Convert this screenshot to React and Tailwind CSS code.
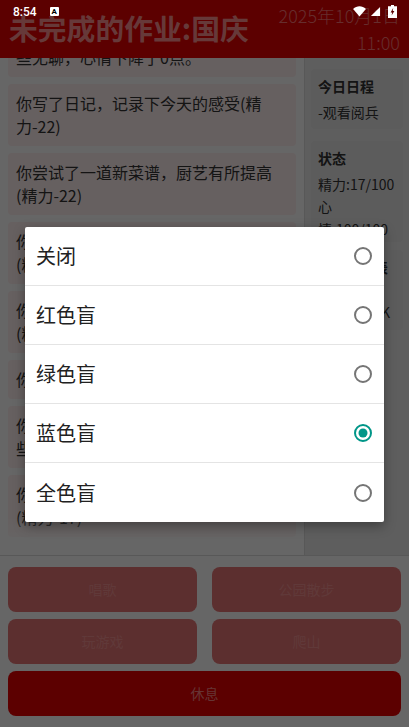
const logs = [
  { id: 1, text: "你今天过得不太开心，整个人都感到有些无聊，心情下降了0点。" },
  { id: 2, text: "你写了日记，记录下今天的感受(精力-22)" },
  { id: 3, text: "你尝试了一道新菜谱，厨艺有所提高(精力-22)" },
  { id: 4, text: "你看了一部老电影，感觉非常有意思(精力-22)" },
  { id: 5, text: "你整理了房间，把东西摆放得很整齐(精力-22)" },
  { id: 6, text: "你睡了一个午觉" },
  { id: 7, text: "你去图书馆看了一会儿书，觉得学到了些新的知识(精力-22)" },
  { id: 8, text: "你出门跑了一会儿步，感觉身体不错(精力-17)" },
];

const options = [
  { id: "off", label: "关闭" },
  { id: "red", label: "红色盲" },
  { id: "green", label: "绿色盲" },
  { id: "blue", label: "蓝色盲", checked: true },
  { id: "all", label: "全色盲" },
];

function Radio({ checked }) {
  return (
    <svg width="20" height="20" viewBox="0 0 20 20">
      <circle cx="10" cy="10" r="8" fill="none" strokeWidth="2" stroke={checked ? "#009688" : "#757575"} />
      {checked && <circle cx="10" cy="10" r="4.5" fill="#009688" />}
    </svg>
  );
}

function StatusBar() {
  return (
    <div className="absolute inset-x-0 top-0 flex h-[23px] items-center text-white">
      <span className="ml-[13px] font-['Roboto',sans-serif] text-[12px] font-medium">8:54</span>
      <span className="ml-[13px] flex h-[9px] w-[9px] items-center justify-center rounded-[1px] bg-white font-['Roboto',sans-serif] text-[8px] leading-none font-bold text-black">
        A
      </span>
      <div className="mr-[12px] ml-auto flex items-center gap-[4px]">
        <svg width="13" height="11" viewBox="0 0 14 12">
          <path d="M0 3.2 C4 -0.6 10 -0.6 14 3.2 L7 11.5 Z" fill="#fff" />
        </svg>
        <svg width="11" height="11" viewBox="0 0 12 12">
          <path d="M11 1 V11 H1 Z" fill="#fff" />
        </svg>
        <svg className="ml-[3px]" width="9" height="13" viewBox="0 0 9 13">
          <path d="M3 0 H6 V1.2 H9 V13 H0 V1.2 H3 Z" fill="#fff" />
          <path d="M5.2 3 L2.6 7.4 H4.2 L3.6 10.6 L6.4 6 H4.7 Z" fill="#5c0000" />
        </svg>
      </div>
    </div>
  );
}

export default function App() {
  return (
    <div className="relative flex h-[727px] w-[409px] flex-col overflow-hidden bg-white font-['Noto_Sans_CJK_SC','Noto_Sans',sans-serif]">
      <header className="z-10 flex h-[58px] shrink-0 justify-between bg-[#e60000] px-[9px]">
        <h1 className="mt-[8px] text-[28.8px] leading-[40px] font-bold text-[#ff8f8f]">未完成的作业:国庆</h1>
        <div className="mt-[2px] text-right text-[18px] leading-[27px] font-light text-[#ff7070]">
          <div>2025年10月1日</div>
          <div>11:00</div>
        </div>
      </header>

      <main className="flex min-h-0 flex-1">
        <div className="relative w-[305px] shrink-0 overflow-hidden border-r border-[#dcdcdc] px-2">
          <div className="-mt-[43px] flex flex-col gap-[7px]">
            {logs.map((log) => (
              <div key={log.id} className="rounded-sm bg-[#fff0f0] p-2 text-base leading-[23px] text-[#333333]">
                {log.text}
              </div>
            ))}
          </div>
          <div className="absolute inset-x-0 bottom-0 h-[40px] bg-gradient-to-t from-white to-transparent" />
        </div>

        <aside className="flex flex-1 flex-col gap-[12px] bg-[#ececec] px-[6px] pt-[11px] text-[14px] leading-[22.5px] text-[#333333]">
          <div className="rounded-sm bg-[#e6e6e6] px-[7px] pt-[6px] pb-[6px]">
            <div className="mb-[3px] font-bold">今日日程</div>
            <div>-观看阅兵</div>
          </div>
          <div className="rounded-sm bg-[#e6e6e6] px-[7px] pt-[6px] pb-[2px]">
            <div className="mb-[3px] font-bold">状态</div>
            <div>精力:17/100</div>
            <div>心情:100/100</div>
          </div>
          <div className="-mt-[4px] rounded-sm bg-[#e6e6e6] px-[7px] pt-[6px] pb-[6px]">
            <div className="font-bold whitespace-nowrap">资金概况表</div>
            <div>年级:3</div>
            <div>存款:1000K</div>
          </div>
        </aside>
      </main>

      <footer className="flex shrink-0 flex-col gap-[7px] border-t border-[#dcdcdc] px-2 pt-[11px] pb-[11px] text-[14px] text-[#f09090]">
        <div className="grid grid-cols-2 gap-x-[15px] gap-y-[7px]">
          {["唱歌", "公园散步", "玩游戏", "爬山"].map((name) => (
            <button key={name} className="h-[45px] rounded-lg bg-[#e67575]">
              {name}
            </button>
          ))}
        </div>
        <button className="h-[45px] rounded-lg bg-[#e60000] text-[#ff8080]">休息</button>
      </footer>

      <div className="absolute inset-0 z-20 flex justify-center bg-black/60 pt-[227px]">
        <div className="h-[295px] w-[359px] rounded-[2px] bg-white shadow-[0_4px_12px_rgba(0,0,0,0.35)]">
          {options.map((opt, i) => (
            <div
              key={opt.id}
              className={`flex h-[59px] items-center justify-between px-[11px] text-[20px] text-[#212121] ${
                i < options.length - 1 ? "border-b border-[#e4e4e4]" : ""
              }`}
            >
              <span>{opt.label}</span>
              <Radio checked={opt.checked} />
            </div>
          ))}
        </div>
      </div>

      <div className="absolute inset-x-0 top-0 z-30">
        <StatusBar />
      </div>
    </div>
  );
}
